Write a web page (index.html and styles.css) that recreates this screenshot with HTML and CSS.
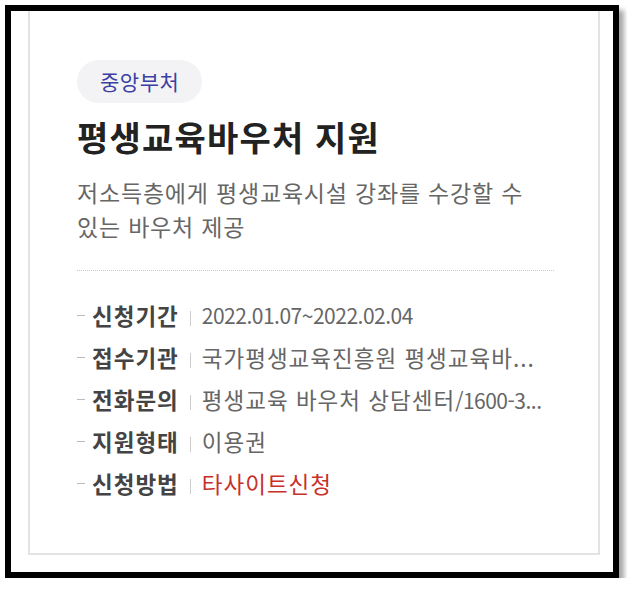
FILE: index.html
```html
<!DOCTYPE html>
<html lang="ko">
<head>
  <meta charset="UTF-8" />
  <meta name="viewport" content="width=device-width, initial-scale=1.0"/>
  <title>평생교육바우처 지원</title>
  <link rel="stylesheet" href="styles.css">
</head>
<body>

  <div class="frame">
    <div class="card">
      <span class="badge">중앙부처</span>
      <h2 class="title">평생교육바우처 지원</h2>
      <p class="desc">저소득층에게 평생교육시설 강좌를 수강할 수 있는 바우처 제공</p>

      <ul class="info">
        <li>
          <span class="label">신청기간</span>
          <span class="value num">2022.01.07~2022.02.04</span>
        </li>
        <li>
          <span class="label">접수기관</span>
          <span class="value">국가평생교육진흥원 평생교육바...</span>
        </li>
        <li>
          <span class="label">전화문의</span>
          <span class="value">평생교육 바우처 상담센터<span class="num">/1600-3...</span></span>
        </li>
        <li>
          <span class="label">지원형태</span>
          <span class="value">이용권</span>
        </li>
        <li>
          <span class="label">신청방법</span>
          <span class="value red">타사이트신청</span>
        </li>
      </ul>
    </div>
  </div>

</body>
</html>
```

FILE: styles.css
```css
body {
  margin: 5px;
  background: white;
  font-family: "Noto Sans CJK KR", "Noto Sans", sans-serif;
}

.frame {
  width: 602px;
  height: 561px;
  border: 6px solid #000;
  box-shadow: 5px 5px 5px rgba(0,0,0,0.35);
  background: white;
}

.card {
  margin: 0 13px 0 17px;
  padding: 49px 44px 49px 47px;
  border: 2px solid #e3e3e3;
  border-top: none;
}

.badge {
  display: inline-block;
  height: 43px;
  line-height: 43px;
  padding: 0 23px;
  border-radius: 22px;
  background: #f3f3f5;
  color: #3b3fa3;
  font-size: 21px;
  letter-spacing: 0.5px;
}

.title {
  margin: 13px 0 0;
  font-size: 34px;
  line-height: 42px;
  font-weight: bold;
  color: #222;
  letter-spacing: 1.2px;
}

.desc {
  margin: 17px 0 0;
  font-size: 23px;
  line-height: 34px;
  color: #666;
  letter-spacing: 0.8px;
  word-break: keep-all;
}

.info {
  list-style: none;
  margin: 27px 0 0;
  padding: 23px 0 0;
  border-top: 1px dotted #c8c8c8;
}

.info li {
  display: flex;
  align-items: center;
  height: 42px;
  font-size: 22.5px;
  letter-spacing: 1px;
}

.info li::before {
  content: "";
  width: 8px;
  height: 1px;
  background: #bbb;
  margin-right: 7px;
}

.label {
  flex-shrink: 0;
  font-weight: bold;
  color: #444;
}

.label::after {
  content: "";
  display: inline-block;
  width: 1px;
  height: 15px;
  background: #ccc;
  margin: 0 11px 0 11px;
  vertical-align: -1px;
}

.value {
  color: #666;
  white-space: nowrap;
  overflow: hidden;
  text-overflow: ellipsis;
}

.num {
  font-size: 21px;
  letter-spacing: -0.5px;
}

.red {
  color: #c8302a;
}
```
